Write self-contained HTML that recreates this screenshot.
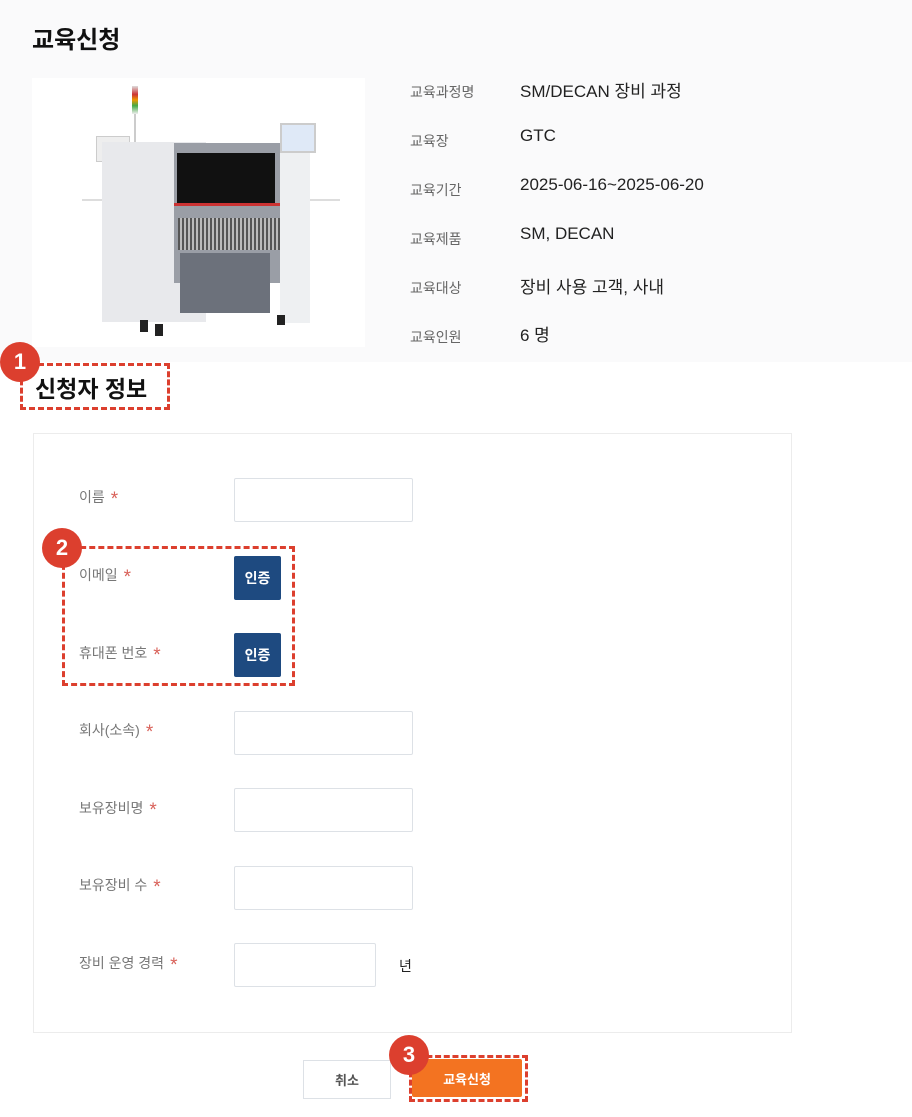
<!DOCTYPE html>
<html><head><meta charset="utf-8"><style>
*{margin:0;padding:0;box-sizing:border-box}
body{width:912px;height:1117px;position:relative;background:#fff;font-family:"Liberation Sans","Noto Sans CJK KR",sans-serif;overflow:hidden}
.a{position:absolute}
.lbl{position:absolute;left:410px;font-size:14px;color:#666}
.val{position:absolute;left:520px;font-size:17px;color:#222}
.fl{position:absolute;left:79px;font-size:14px;color:#777;transform:translateY(-50%);white-space:nowrap}
.fl b{color:#d9625a;font-weight:normal;margin-left:6px;font-size:19px;vertical-align:-3px}
.in{position:absolute;left:234px;width:179px;height:44px;border:1px solid #dde1e6;border-radius:2px;background:#fff}
.btn{position:absolute;left:234px;width:47px;height:44px;background:#1e4a80;border-radius:2px;color:#fff;font-size:14px;font-weight:bold;display:flex;align-items:center;justify-content:center}
.dash{position:absolute;border:3px dashed #dc3f2e}
.c{position:absolute;width:40px;height:40px;border-radius:50%;background:#dc3f2e;color:#fff;font-weight:bold;font-size:22px;display:flex;align-items:center;justify-content:center}
</style></head><body>
<div class="a" style="left:0;top:0;width:912px;height:362px;background:#fafafb"></div>
<div class="a" style="left:32px;top:20px;font-size:24px;font-weight:bold;color:#111">교육신청</div>
<div class="a" style="left:32px;top:78px;width:333px;height:269px;background:#fff;overflow:hidden">
 <div class="a" style="left:100px;top:8px;width:6px;height:28px;background:linear-gradient(#ddd,#c33 30%,#e90 50%,#4a4 70%,#eee)"></div>
 <div class="a" style="left:102px;top:36px;width:2px;height:40px;background:#ccc"></div>
 <div class="a" style="left:64px;top:58px;width:34px;height:26px;background:#eee;border:1px solid #ccc"></div>
 <div class="a" style="left:70px;top:64px;width:104px;height:180px;background:#e8e9ec"></div>
 <div class="a" style="left:142px;top:65px;width:108px;height:140px;background:#9a9ea6"></div>
 <div class="a" style="left:145px;top:75px;width:98px;height:50px;background:#111"></div>
 <div class="a" style="left:142px;top:125px;width:108px;height:3px;background:#c33"></div>
 <div class="a" style="left:146px;top:140px;width:104px;height:32px;background:repeating-linear-gradient(90deg,#555 0 2px,#bbb 2px 4px)"></div>
 <div class="a" style="left:148px;top:175px;width:90px;height:60px;background:#6c717b"></div>
 <div class="a" style="left:248px;top:65px;width:30px;height:180px;background:#eef0f2"></div>
 <div class="a" style="left:248px;top:45px;width:36px;height:30px;background:#dfe9f7;border:2px solid #ccc"></div>
 <div class="a" style="left:50px;top:121px;width:20px;height:2px;background:#ddd"></div>
 <div class="a" style="left:278px;top:121px;width:30px;height:2px;background:#ddd"></div>
 <div class="a" style="left:108px;top:242px;width:8px;height:12px;background:#222"></div>
 <div class="a" style="left:245px;top:237px;width:8px;height:10px;background:#222"></div>
 <div class="a" style="left:123px;top:246px;width:8px;height:12px;background:#222"></div>
</div>
<div class="lbl" style="top:82px">교육과정명</div><div class="val" style="top:77px">SM/DECAN 장비 과정</div>
<div class="lbl" style="top:131px">교육장</div><div class="val" style="top:126px">GTC</div>
<div class="lbl" style="top:180px">교육기간</div><div class="val" style="top:175px">2025-06-16~2025-06-20</div>
<div class="lbl" style="top:229px">교육제품</div><div class="val" style="top:224px">SM, DECAN</div>
<div class="lbl" style="top:278px">교육대상</div><div class="val" style="top:273px">장비 사용 고객, 사내</div>
<div class="lbl" style="top:327px">교육인원</div><div class="val" style="top:321px">6 명</div>

<div class="a" style="left:35px;top:370px;font-size:23px;font-weight:bold;color:#111">신청자 정보</div>
<div class="a" style="left:33px;top:433px;width:759px;height:600px;border:1px solid #ececec"></div>

<div class="fl" style="top:499px">이름<b>*</b></div><div class="in" style="top:478px"></div>
<div class="fl" style="top:577px">이메일<b>*</b></div><div class="btn" style="top:556px">인증</div>
<div class="fl" style="top:655px">휴대폰 번호<b>*</b></div><div class="btn" style="top:633px">인증</div>
<div class="fl" style="top:732px">회사(소속)<b>*</b></div><div class="in" style="top:711px"></div>
<div class="fl" style="top:810px">보유장비명<b>*</b></div><div class="in" style="top:788px"></div>
<div class="fl" style="top:887px">보유장비 수<b>*</b></div><div class="in" style="top:866px"></div>
<div class="fl" style="top:965px">장비 운영 경력<b>*</b></div><div class="in" style="top:943px;width:142px"></div>
<div class="a" style="left:399px;top:956px;font-size:14px;color:#222">년</div>

<div class="a" style="left:303px;top:1060px;width:88px;height:39px;border:1px solid #dde1e6;background:#fff;font-size:13px;font-weight:bold;color:#555;display:flex;align-items:center;justify-content:center">취소</div>
<div class="a" style="left:412px;top:1059px;width:110px;height:38px;background:#f37321;border-radius:2px;font-size:13px;font-weight:bold;color:#fff;display:flex;align-items:center;justify-content:center">교육신청</div>

<div class="dash" style="left:20px;top:363px;width:150px;height:47px"></div>
<div class="dash" style="left:62px;top:546px;width:233px;height:140px"></div>
<div class="dash" style="left:409px;top:1055px;width:119px;height:47px"></div>
<div class="c" style="left:0;top:342px">1</div>
<div class="c" style="left:42px;top:528px">2</div>
<div class="c" style="left:389px;top:1035px">3</div>
</body></html>
